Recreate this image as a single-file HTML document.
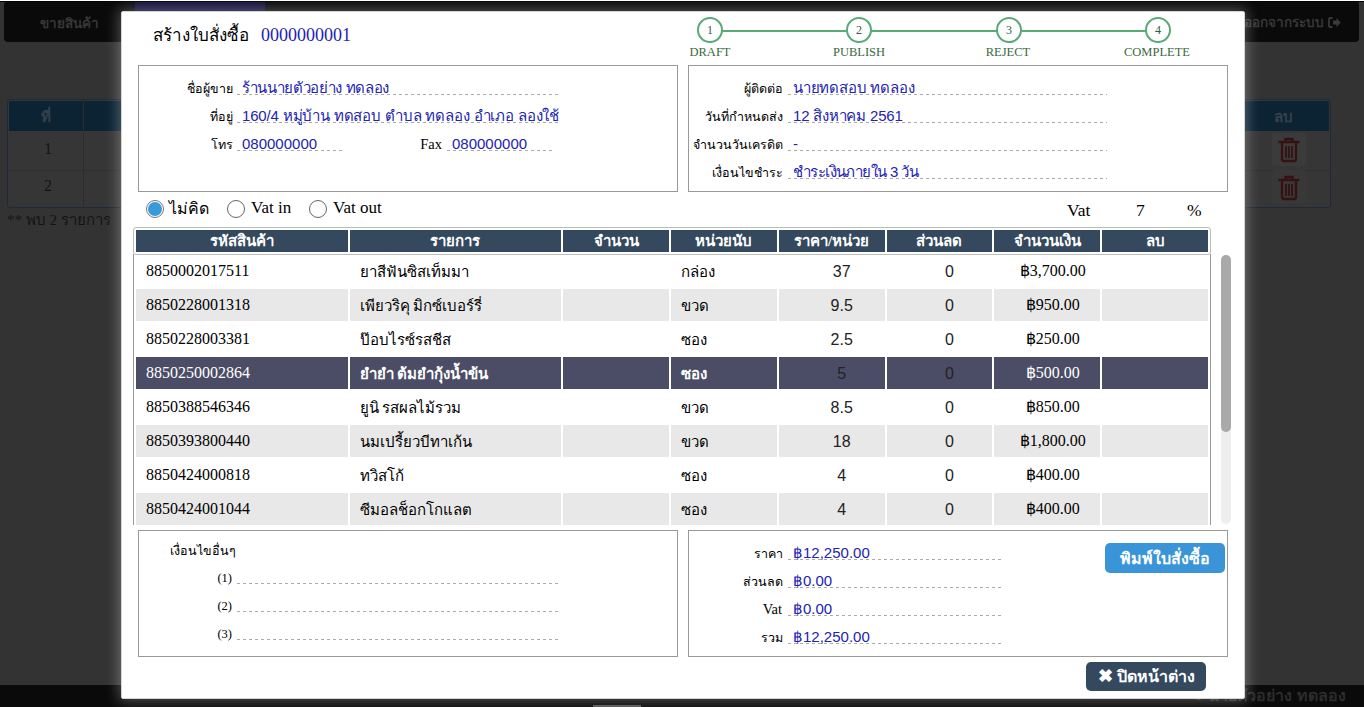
<!DOCTYPE html>
<html><head><meta charset="utf-8">
<style>
*{box-sizing:border-box;margin:0;padding:0}
html,body{width:1364px;height:707px;overflow:hidden}
body{background:#333;font-family:"Liberation Serif",serif;font-size:16px;color:#000;position:relative}
.abs{position:absolute;white-space:nowrap}
.sans{font-family:"Liberation Sans",sans-serif}
/* background page */
#nav{left:4px;top:1px;width:1355px;height:41px;background:#0a0a0a;border-radius:4px}
#nav .t1{left:36px;top:11px;color:#363636;font-size:13.5px;font-weight:bold}
#nav .t2{right:35px;top:10px;color:#363636;font-size:13.5px;font-weight:bold}
#bgtbl{left:7px;top:99px;width:1324px;height:109px;border:1px solid #1e2a35;background:#363636;border-radius:3px}
#bgtbl .hd{left:1px;top:1px;width:1320px;height:30px;background:#0c2334}
#foot{left:0;top:685px;width:1364px;height:22px;background:#0a0a0a}
/* modal */
#modal{left:121px;top:11px;width:1124px;height:688px;background:#fff;border:1px solid #d4d4d4;border-radius:2px;box-shadow:0 0 14px 2px rgba(255,255,255,.3)}
.title{left:153px;top:21px;font-size:18px}
.blue{color:#2222b4}
.circ{width:26px;height:26px;border:2px solid #5aaa78;border-radius:50%;background:#fff;font-size:12px;line-height:22px;text-align:center;color:#3a5a3e}
.sline{height:2px;background:#5aaa78}
.slab{font-size:12.5px;color:#3a6a3e;text-align:center;width:100px}
.box{border:1px solid #999}
.lab{font-size:12.5px;text-align:right;margin-top:-0.5px}
.val{font-family:"Liberation Sans",sans-serif;background:linear-gradient(to right,#aaa 50%,rgba(255,255,255,0) 50%) left bottom/6px 1px repeat-x;font-size:15px;color:#2222b4;padding-left:5px;height:20px;line-height:25px}
.radio{width:18px;height:18px;border:1px solid #666;border-radius:50%;background:#fff}
.radio.on{border-color:#777}
.radio.on:after{content:"";position:absolute;left:1px;top:1px;width:14px;height:14px;border-radius:50%;background:#3a9ad9}
table{border-collapse:separate;border-spacing:2px;table-layout:fixed}
#thead{left:133px;top:227px;width:1078px;border:1px solid #bbb;border-radius:3px}
#thead td{background:#34495e;color:#fff;font-weight:bold;text-align:center;height:22px;font-size:15px;line-height:22px;padding:0}
#tbody{left:134px;top:253px;width:1077px}
#tbody td{height:32px;padding:0 10px;font-size:16px;line-height:32px}
#tbody tr:nth-child(even) td{background:#e8e8e8}
#tbody tr.sel td{background:#4a4d65;color:#fff}
#tbody tr.sel td.th{font-weight:bold}
.c{text-align:center}
#tbody td.t{font-size:15px;padding-top:3px;line-height:29px;height:32px}
.n{font-family:"Liberation Sans",sans-serif;font-size:15px;padding-top:1px!important;line-height:31px!important;padding-left:30px!important;padding-right:10px!important;color:#222}
.a{padding-left:21px!important;padding-right:10px!important}
#tbody tr.sel td.n{color:#222}
</style></head>
<body>
<div id="nav" class="abs sans">
  <div class="abs" style="left:131px;top:0;width:130px;height:38px;background:#15123c"></div>
  <div class="abs t1">ขายสินค้า</div>
  <div class="abs t2">ออกจากระบบ</div>
  <svg class="abs" style="left:1324px;top:16px" width="13" height="11" viewBox="0 0 13 11"><path d="M4.5 1H2a1 1 0 0 0-1 1v7a1 1 0 0 0 1 1h2.5" fill="none" stroke="#3a3a3a" stroke-width="1.8"/><path d="M5 3.5h3.5V1l4.2 4.5L8.5 10V7.5H5z" fill="#3a3a3a"/></svg>
</div>
<div class="abs" style="left:0;top:0;width:1364px;height:1px;background:#fff"></div>
<div class="abs" style="left:0;top:1px;width:1364px;height:1px;background:#000"></div>
<div id="bgtbl" class="abs">
  <div class="abs hd"></div>
  <div class="abs" style="left:75px;top:0;width:1px;height:108px;background:#2c2c2c"></div>
  <div class="abs" style="left:0;top:70px;width:100%;height:1px;background:#2f2f2f"></div>
  <div class="abs" style="left:33px;top:5px;color:#34414b;font-size:15px;font-weight:bold">ที่</div>
  <div class="abs" style="left:1266px;top:5px;color:#34414b;font-size:15px;font-weight:bold">ลบ</div>
  <div class="abs" style="left:36px;top:40px;color:#141414;font-size:16px">1</div>
  <div class="abs" style="left:36px;top:77px;color:#141414;font-size:16px">2</div>
  <div class="abs" style="left:1264px;top:33px;width:34px;height:33px;background:#3b3b3b;border-radius:3px"></div>
  <div class="abs" style="left:1264px;top:70px;width:34px;height:33px;background:#383838;border-radius:3px"></div>
  <svg class="abs" style="left:1269px;top:37px" width="24" height="26" viewBox="0 0 24 26"><g fill="none" stroke="#361111" stroke-width="2.3"><path d="M1.5 5h21M8.5 5V2h7v3M5 6v16a2 2 0 0 0 2 2h10a2 2 0 0 0 2-2V6"/><path d="M9 9v12M12 9v12M15 9v12" stroke-width="1.8"/></g></svg>
  <svg class="abs" style="left:1269px;top:75px" width="24" height="26" viewBox="0 0 24 26"><g fill="none" stroke="#361111" stroke-width="2.3"><path d="M1.5 5h21M8.5 5V2h7v3M5 6v16a2 2 0 0 0 2 2h10a2 2 0 0 0 2-2V6"/><path d="M9 9v12M12 9v12M15 9v12" stroke-width="1.8"/></g></svg>
</div>
<div class="abs" style="left:7px;top:208px;color:#141414;font-size:15px">** พบ 2 รายการ</div>
<div id="foot" class="abs">
  <div class="abs sans" style="left:1194px;top:-2px;color:#2c2c2c;font-size:16px;font-weight:bold"><span style="color:#1c3a1c">&#9679;</span> นายตัวอย่าง ทดลอง</div>
</div>
<div class="abs" style="left:593px;top:705px;width:48px;height:2px;background:#555"></div>

<div id="modal" class="abs"></div>

<div class="abs title"><span style="font-size:17px">สร้างใบสั่งซื้อ</span><span class="blue" style="position:absolute;left:108px;top:4px">0000000001</span></div>

<!-- stepper -->
<div class="abs sline" style="left:720px;top:30px;width:427px"></div>
<div class="abs circ" style="left:697px;top:17px">1</div>
<div class="abs circ" style="left:846px;top:17px">2</div>
<div class="abs circ" style="left:996px;top:17px">3</div>
<div class="abs circ" style="left:1145px;top:17px">4</div>
<div class="abs slab" style="left:660px;top:44.5px">DRAFT</div>
<div class="abs slab" style="left:809px;top:44.5px">PUBLISH</div>
<div class="abs slab" style="left:958px;top:44.5px">REJECT</div>
<div class="abs slab" style="left:1107px;top:44.5px">COMPLETE</div>

<!-- info boxes -->
<div class="abs box" style="left:138px;top:65px;width:540px;height:127px"></div>
<div class="abs box" style="left:688px;top:65px;width:540px;height:127px"></div>

<div class="abs lab" style="left:140px;top:79px;width:93px">ชื่อผู้ขาย</div>
<div class="abs lab" style="left:140px;top:107px;width:93px">ที่อยู่</div>
<div class="abs lab" style="left:140px;top:135px;width:93px">โทร</div>
<div class="abs val" style="left:237px;top:75px;width:321px;letter-spacing:-0.35px">ร้านนายตัวอย่าง ทดลอง</div>
<div class="abs val" style="left:237px;top:103px;width:321px;letter-spacing:-0.17px">160/4 หมู่บ้าน ทดสอบ ตำบล ทดลอง อำเภอ ลองใช้</div>
<div class="abs val" style="left:237px;top:131px;width:106px">080000000</div>
<div class="abs lab" style="left:410px;top:136px;width:32px;font-size:14.5px">Fax</div>
<div class="abs val" style="left:447px;top:131px;width:107px">080000000</div>

<div class="abs lab" style="left:690px;top:79px;width:93px">ผู้ติดต่อ</div>
<div class="abs lab" style="left:690px;top:107px;width:93px">วันที่กำหนดส่ง</div>
<div class="abs lab" style="left:690px;top:135px;width:93px">จำนวนวันเครดิต</div>
<div class="abs lab" style="left:690px;top:163px;width:93px">เงื่อนไขชำระ</div>
<div class="abs val" style="left:788px;top:75px;width:319px;letter-spacing:-0.2px">นายทดสอบ ทดลอง</div>
<div class="abs val" style="left:788px;top:103px;width:319px;letter-spacing:-0.2px">12 สิงหาคม 2561</div>
<div class="abs val" style="left:788px;top:131px;width:319px">-</div>
<div class="abs val" style="left:788px;top:159px;width:319px;letter-spacing:-0.6px">ชำระเงินภายใน 3 วัน</div>

<!-- radios -->
<div class="abs radio on" style="left:146px;top:200px"></div>
<div class="abs" style="left:169px;top:196px;font-size:16px">ไม่คิด</div>
<div class="abs radio" style="left:227px;top:200px"></div>
<div class="abs" style="left:251px;top:198px;font-size:17px">Vat in</div>
<div class="abs radio" style="left:309px;top:200px"></div>
<div class="abs" style="left:333px;top:198px;font-size:17px">Vat out</div>
<div class="abs" style="left:1067px;top:200px;font-size:17.5px">Vat</div>
<div class="abs" style="left:1136px;top:200px;font-size:17.5px">7</div>
<div class="abs" style="left:1187px;top:200px;font-size:17.5px">%</div>

<!-- table header -->
<table id="thead" class="abs"><colgroup><col style="width:20%"><col style="width:20%"><col style="width:10%"><col style="width:10%"><col style="width:10%"><col style="width:10%"><col style="width:10%"><col style="width:10%"></colgroup>
<tr><td>รหัสสินค้า</td><td>รายการ</td><td>จำนวน</td><td>หน่วยนับ</td><td>ราคา/หน่วย</td><td>ส่วนลด</td><td>จำนวนเงิน</td><td>ลบ</td></tr></table>

<div class="abs" style="left:133px;top:254px;width:1px;height:271px;background:#999"></div>
<div class="abs" style="left:1210px;top:254px;width:1px;height:271px;background:#999"></div>
<div class="abs" style="left:134px;top:253px;width:1076px;height:272px;overflow:hidden">
<table id="tbody" style="position:absolute;left:0;top:0;width:1076px"><colgroup><col style="width:20%"><col style="width:20%"><col style="width:10%"><col style="width:10%"><col style="width:10%"><col style="width:10%"><col style="width:10%"><col style="width:10%"></colgroup>
<tr><td>8850002017511</td><td class="t">ยาสีฟันซิสเท็มมา</td><td></td><td class="t">กล่อง</td><td class="c n">37</td><td class="c n">0</td><td class="c a">฿3,700.00</td><td></td></tr>
<tr><td>8850228001318</td><td class="t">เพียวริคุ มิกซ์เบอร์รี่</td><td></td><td class="t">ขวด</td><td class="c n">9.5</td><td class="c n">0</td><td class="c a">฿950.00</td><td></td></tr>
<tr><td>8850228003381</td><td class="t">ป๊อบไรซ์รสชีส</td><td></td><td class="t">ซอง</td><td class="c n">2.5</td><td class="c n">0</td><td class="c a">฿250.00</td><td></td></tr>
<tr class="sel"><td>8850250002864</td><td class="th t">ยำยำ ต้มยำกุ้งน้ำข้น</td><td></td><td class="th t">ซอง</td><td class="c n">5</td><td class="c n">0</td><td class="c a">฿500.00</td><td></td></tr>
<tr><td>8850388546346</td><td class="t">ยูนิ รสผลไม้รวม</td><td></td><td class="t">ขวด</td><td class="c n">8.5</td><td class="c n">0</td><td class="c a">฿850.00</td><td></td></tr>
<tr><td>8850393800440</td><td class="t">นมเปรี้ยวบีทาเก้น</td><td></td><td class="t">ขวด</td><td class="c n">18</td><td class="c n">0</td><td class="c a">฿1,800.00</td><td></td></tr>
<tr><td>8850424000818</td><td class="t">ทวิสโก้</td><td></td><td class="t">ซอง</td><td class="c n">4</td><td class="c n">0</td><td class="c a">฿400.00</td><td></td></tr>
<tr><td>8850424001044</td><td class="t">ซีมอลช็อกโกแลต</td><td></td><td class="t">ซอง</td><td class="c n">4</td><td class="c n">0</td><td class="c a">฿400.00</td><td></td></tr>
</table></div>
<!-- scrollbar -->
<div class="abs" style="left:1221px;top:255px;width:10px;height:269px;background:#eee;border-radius:5px"></div>
<div class="abs" style="left:1221px;top:255px;width:10px;height:177px;background:#a9a9a9;border-radius:5px"></div>

<!-- bottom boxes -->
<div class="abs box" style="left:138px;top:530px;width:540px;height:127px"></div>
<div class="abs box" style="left:688px;top:530px;width:540px;height:127px"></div>
<div class="abs" style="left:170px;top:540.5px;font-size:12.5px">เงื่อนไขอื่นๆ</div>
<div class="abs lab" style="left:200px;top:571px;width:32px">(1)</div>
<div class="abs lab" style="left:200px;top:599px;width:32px">(2)</div>
<div class="abs lab" style="left:200px;top:627px;width:32px">(3)</div>
<div class="abs val" style="left:237px;top:564px;width:321px"></div>
<div class="abs val" style="left:237px;top:592px;width:321px"></div>
<div class="abs val" style="left:237px;top:620px;width:321px"></div>

<div class="abs lab" style="left:690px;top:544px;width:93px">ราคา</div>
<div class="abs lab" style="left:690px;top:572px;width:93px">ส่วนลด</div>
<div class="abs lab" style="left:690px;top:601px;width:92px;font-size:14.5px">Vat</div>
<div class="abs lab" style="left:690px;top:628px;width:93px">รวม</div>
<div class="abs val" style="left:788px;top:540px;width:213px">฿12,250.00</div>
<div class="abs val" style="left:788px;top:568px;width:213px">฿0.00</div>
<div class="abs val" style="left:788px;top:596px;width:213px">฿0.00</div>
<div class="abs val" style="left:788px;top:624px;width:213px">฿12,250.00</div>

<div class="abs" style="left:1105px;top:543px;width:120px;height:30px;background:#3a95d8;border-radius:5px;color:#fff;font-weight:bold;font-size:16px;text-align:center;line-height:32px">พิมพ์ใบสั่งซื้อ</div>
<div class="abs" style="left:1086px;top:662px;width:120px;height:29px;background:#34495e;border-radius:5px;color:#fff;font-weight:bold;font-size:16px;text-align:center;line-height:29px"><span style="font-size:18px">✖</span> ปิดหน้าต่าง</div>
</body></html>
